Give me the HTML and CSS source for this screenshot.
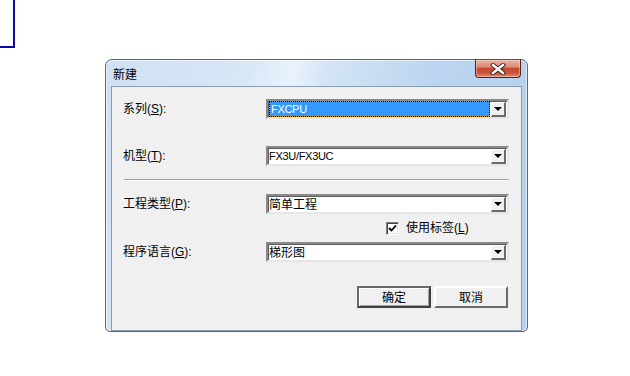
FILE: index.html
```html
<!DOCTYPE html>
<html>
<head>
<meta charset="utf-8">
<link rel="stylesheet" href="styles.css">
</head>
<body>
<div class="corner"></div>
<div class="window">
  <div class="titlebar">
    <span class="title">新建</span>
    <div class="close">
      <svg width="16" height="12" viewBox="0 0 16 12">
        <path d="M3 2 L13 10 M13 2 L3 10" stroke="#3b1a14" stroke-width="4.2" stroke-linecap="square" fill="none"/>
        <path d="M3 2 L13 10 M13 2 L3 10" stroke="#ffffff" stroke-width="2.4" stroke-linecap="square" fill="none"/>
      </svg>
    </div>
  </div>
  <div class="client">
    <div class="row">
      <label class="lbl">系列(<u>S</u>):</label>
      <div class="combo"><span class="val sel">FXCPU</span><span class="drop"><i></i></span></div>
    </div>
    <div class="row r2">
      <label class="lbl">机型(<u>T</u>):</label>
      <div class="combo"><span class="val">FX3U/FX3UC</span><span class="drop"><i></i></span></div>
    </div>
    <div class="sep"></div>
    <div class="row r3">
      <label class="lbl">工程类型(<u>P</u>):</label>
      <div class="combo"><span class="val cjk">简单工程</span><span class="drop"><i></i></span></div>
    </div>
    <div class="checkrow">
      <span class="box">
        <svg width="9" height="9" viewBox="0 0 9 9"><path d="M1 4 L3.5 6.5 L8 1.5" stroke="#000" stroke-width="1.8" fill="none"/></svg>
      </span>
      <span class="cbtext">使用标签(<u>L</u>)</span>
    </div>
    <div class="row r4">
      <label class="lbl">程序语言(<u>G</u>):</label>
      <div class="combo"><span class="val cjk">梯形图</span><span class="drop"><i></i></span></div>
    </div>
    <div class="buttons">
      <div class="btn def">确定</div>
      <div class="btn">取消</div>
    </div>
  </div>
</div>
</body>
</html>
```

FILE: styles.css
```css
html, body {
  margin: 0;
  padding: 0;
  background: #ffffff;
  font-family: "Liberation Sans", "Noto Sans CJK SC", sans-serif;
  font-size: 12px;
  color: #000;
}
.corner {
  width: 13px;
  height: 46px;
  border-right: 2px solid #0a0aa8;
  border-bottom: 2px solid #0a0aa8;
}
.window {
  margin-left: 105px;
  margin-top: 11px;
  width: 421px;
  height: 271px;
  border: 1px solid #5a6677;
  border-radius: 7px 7px 5px 5px;
  background: linear-gradient(100deg, #cfe1f4 0%, #d8e7f6 30%, #e9f2fb 40%, #d3e4f6 48%, #bcd5ef 70%, #b4d0ee 100%);
  box-shadow: inset 0 0 0 1px rgba(255,255,255,0.6);
  display: flex;
  flex-direction: column;
}
.titlebar {
  height: 27px;
  display: flex;
  align-items: flex-start;
  justify-content: space-between;
}
.title {
  margin-left: 7px;
  margin-top: 6px;
  font-family: "Noto Sans CJK SC", sans-serif;
  font-size: 12px;
  line-height: 16px;
  color: #000;
}
.close {
  margin-top: -1px;
  margin-right: 6px;
  width: 44px;
  height: 17px;
  border: 1px solid #5b2218;
  border-top-color: #7a4a42;
  border-radius: 0 0 4px 4px;
  background: linear-gradient(#e9b5a8 0%, #dc8c78 40%, #c74a30 50%, #c8503a 75%, #e09070 100%);
  box-shadow: inset 0 0 0 1px rgba(255,220,210,0.45);
  display: flex;
  align-items: center;
  justify-content: center;
}
.close svg { display: block; }
.client {
  margin: 0 5px 0 5px;
  height: 235px;
  border: 1px solid #8a9cb2;
  background: #f0f0f0;
  padding: 12px 12px 0 11px;
  box-sizing: content-box;
  width: 386px;
}
.row {
  display: grid;
  grid-template-columns: 143px 243px;
  align-items: center;
  height: 20px;
}
.r2 { margin-top: 27px; }
.r3 { margin-top: 13px; }
.r4 { margin-top: 7px; }
.lbl {
  line-height: 16px;
  white-space: nowrap;
}
.combo {
  height: 16px;
  border-style: solid;
  border-width: 2px;
  border-color: #8a8a8a #e6e6e6 #e6e6e6 #8a8a8a;
  background: #ffffff;
  display: flex;
  align-items: center;
  padding-left: 0;
  box-shadow: inset 1px 1px 0 #5e5e5e;
}
.val {
  flex: 1;
  height: 16px;
  line-height: 16px;
  padding-left: 1px;
  font-family: "Liberation Sans", sans-serif;
  font-size: 11px;
  letter-spacing: -0.3px;
  white-space: nowrap;
}
.val.cjk {
  font-family: "Noto Sans CJK SC", sans-serif;
  font-size: 12px;
  letter-spacing: 0;
}
.val.sel {
  margin-left: 1px;
  height: 14px;
  line-height: 14px;
  color: #ffffff;
  border: 1px dotted #000;
  background: linear-gradient(#3399ff, #3399ff) padding-box, linear-gradient(#d08c20, #d08c20) border-box;
  margin-right: 1px;
}
.drop {
  width: 12px;
  height: 12px;
  margin-right: 1px;
  border-style: solid;
  border-width: 1px 2px 2px 1px;
  border-color: #ffffff #6a6a6a #6a6a6a #ffffff;
  background: #f0f0f0;
  display: flex;
  align-items: center;
  justify-content: center;
}
.drop i {
  display: block;
  width: 0;
  height: 0;
  border-left: 4px solid transparent;
  border-right: 4px solid transparent;
  border-top: 4px solid #000;
  margin-top: 1px;
}
.sep {
  margin-top: 13px;
  margin-left: 1px;
  width: 385px;
  height: 1px;
  background: #a0a0a0;
  border-bottom: 1px solid #ffffff;
}
.checkrow {
  margin-top: 7px;
  height: 14px;
  display: flex;
  align-items: center;
  padding-left: 263px;
}
.box {
  width: 9px;
  height: 9px;
  border-style: solid;
  border-width: 1px;
  border-color: #808080 #ffffff #ffffff #808080;
  box-shadow: inset 1px 1px 0 #404040, inset -1px -1px 0 #e0e0e0;
  background: #ffffff;
  padding: 1px;
  display: flex;
  align-items: center;
  justify-content: center;
}
.box svg { display: block; }
.cbtext {
  margin-left: 7px;
  line-height: 14px;
}
.buttons {
  margin-top: 24px;
  display: flex;
  justify-content: flex-end;
  gap: 3px;
  padding-right: 1px;
}
.btn {
  width: 70px;
  height: 18px;
  border-style: solid;
  border-width: 2px;
  border-color: #ffffff #6a6a6a #6a6a6a #ffffff;
  background: #f0f0f0;
  text-align: center;
  line-height: 18px;
  font-family: "Noto Sans CJK SC", sans-serif;
  font-size: 12px;
}
.btn.def {
  border-color: #6a6a6a #404040 #404040 #6a6a6a;
  box-shadow: inset 1px 1px 0 #ffffff, inset -1px -1px 0 #a0a0a0;
}
```
